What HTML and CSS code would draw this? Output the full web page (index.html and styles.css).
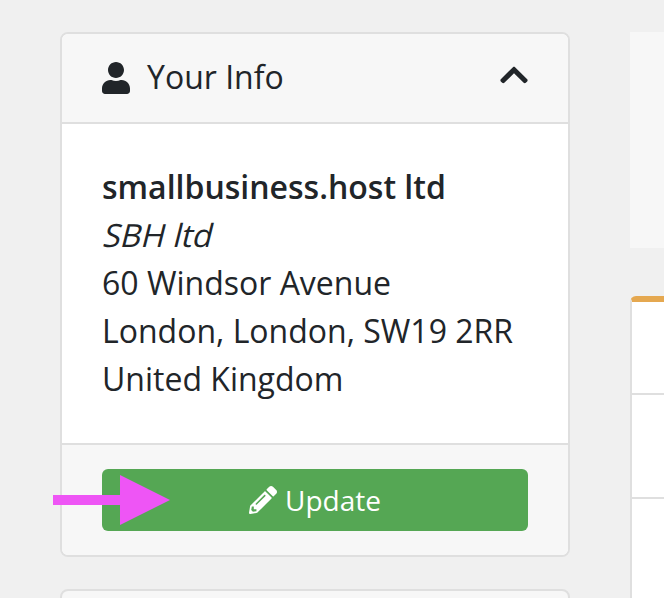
FILE: index.html
```html
<!DOCTYPE html>
<html lang="en">
<head>
    <meta charset="UTF-8">
    <meta name="viewport" content="width=device-width, initial-scale=1.0">
    <title>Your Info</title>
    <link rel="stylesheet" href="styles.css">
</head>
<body>
    <div class="page">
        <div class="sidebar">
            <div class="card">
                <div class="card-header">
                    <div class="card-title">
                        <svg class="icon-user" viewBox="0 0 448 512"><path d="M224 256c70.7 0 128-57.3 128-128S294.7 0 224 0 96 57.3 96 128s57.3 128 128 128zm89.6 32h-16.7c-22.2 10.2-46.9 16-72.9 16s-50.6-5.8-72.9-16h-16.7C60.2 288 0 348.2 0 422.4V464c0 26.5 21.5 48 48 48h352c26.5 0 48-21.5 48-48v-41.6c0-74.2-60.2-134.4-134.4-134.4z"/></svg>
                        <span class="card-title-text">Your Info</span>
                    </div>
                    <svg class="icon-chevron" viewBox="0 0 448 512"><path d="M240.971 130.524l194.343 194.343c9.373 9.373 9.373 24.569 0 33.941l-22.667 22.667c-9.357 9.357-24.522 9.375-33.901.04L224 227.495 69.255 381.516c-9.379 9.335-24.544 9.317-33.901-.04l-22.667-22.667c-9.373-9.373-9.373-24.569 0-33.941L207.03 130.525c9.372-9.373 24.568-9.373 33.941-.001z"/></svg>
                </div>
                <div class="card-body">
                    <div class="company">smallbusiness.host ltd</div>
                    <div><span class="trading-name">SBH ltd</span></div>
                    <div>60 Windsor Avenue</div>
                    <div>London, London, SW19 2RR</div>
                    <div>United Kingdom</div>
                </div>
                <div class="card-footer">
                    <button class="update-btn">
                        <svg class="icon-pencil" viewBox="0 0 512 512"><path d="M497.9 142.1l-46.1 46.1c-4.7 4.7-12.3 4.7-17 0l-111-111c-4.7-4.7-4.7-12.3 0-17l46.1-46.1c18.7-18.7 49.1-18.7 67.9 0l60.1 60.1c18.8 18.7 18.8 49.1 0 67.9zM284.2 99.8L21.6 362.4.4 483.9c-2.9 16.4 11.4 30.6 27.8 27.8l121.5-21.3 262.6-262.6c4.7-4.7 4.7-12.3 0-17l-111-111c-4.8-4.7-12.4-4.7-17.1 0zM124.1 339.9c-5.5-5.5-5.5-14.3 0-19.8l154-154c5.5-5.5 14.3-5.5 19.8 0s5.5 14.3 0 19.8l-154 154c-5.5 5.5-14.3 5.5-19.8 0zM88 424h48v36.3l-64.5 11.3-31.1-31.1L51.7 376H88v48z"/></svg>
                        Update
                    </button>
                </div>
            </div>
            <div class="card next-card"></div>
        </div>
        <div class="main">
            <div class="notice"></div>
            <div class="panel">
                <div class="panel-row panel-row-first"></div>
                <div class="panel-row"></div>
                <div class="panel-row"></div>
            </div>
        </div>
    </div>

    <svg class="arrow" viewBox="0 0 117 50"><path d="M0 20h67V0l50 25-50 25V30H0z"/></svg>
</body>
</html>
```

FILE: styles.css
```css
body {
    margin: 0;
    background-color: #f0f0f0;
    color: #212529;
    font-family: "Open Sans", sans-serif;
    font-size: 32px;
    line-height: 48px;
}
.page {
    display: flex;
    gap: 60px;
    box-sizing: border-box;
    height: 100vh;
    padding: 32px 0 0 60px;
    overflow: hidden;
}
.sidebar {
    flex: 0 0 510px;
}
.main {
    flex: 1;
    min-width: 0;
}
.card {
    background-color: #fff;
    border: 2px solid #dfdfdf;
    border-radius: 8px;
    box-sizing: border-box;
}
.card-header {
    display: flex;
    justify-content: space-between;
    align-items: center;
    height: 88px;
    padding: 0 40px;
    background-color: #f7f7f7;
    border-bottom: 2px solid #dfdfdf;
    border-radius: 6px 6px 0 0;
}
.card-title {
    display: flex;
    align-items: center;
    gap: 17px;
}
.card-title-text {
    margin-top: -2px;
}
.icon-user {
    width: 28px;
    height: 32px;
    fill: #212529;
}
.icon-chevron {
    width: 28px;
    height: 32px;
    fill: #212529;
    margin-top: -6px;
}
.card-body {
    padding: 39px 40px 0;
    background-color: #fff;
    height: 319px;
    box-sizing: border-box;
}
.company {
    font-weight: 600;
}
/* regular face slanted, the real italic is narrower than the screenshot */
.trading-name {
    display: inline-block;
    transform: skewX(-14deg);
    transform-origin: left 34px;
}
.card-footer {
    padding: 24px 40px;
    background-color: #f7f7f7;
    border-top: 2px solid #dfdfdf;
    border-radius: 0 0 6px 6px;
}
.update-btn {
    display: flex;
    justify-content: center;
    align-items: center;
    gap: 8px;
    width: 100%;
    height: 62px;
    padding: 0;
    background-color: #55a754;
    color: #fff;
    border: none;
    border-radius: 6px;
    font-family: inherit;
    font-size: 28px;
}
.icon-pencil {
    width: 28px;
    height: 28px;
    fill: #fff;
}
.next-card {
    height: 100px;
    margin-top: 32px;
    background-color: #f7f7f7;
}
.notice {
    height: 216px;
    background-color: #f7f7f7;
}
.panel {
    height: 400px;
    margin-top: 48px;
    background-color: #fff;
    border-top: 6px solid #e5a850;
    border-left: 2px solid #dfdfdf;
    border-top-left-radius: 6px;
}
.panel-row {
    height: 102px;
    border-bottom: 2px solid #dfdfdf;
}
.panel-row-first {
    height: 91px;
}
.arrow {
    position: absolute;
    left: 53px;
    top: 475px;
    width: 117px;
    height: 50px;
    fill: #ee55f5;
}
```
